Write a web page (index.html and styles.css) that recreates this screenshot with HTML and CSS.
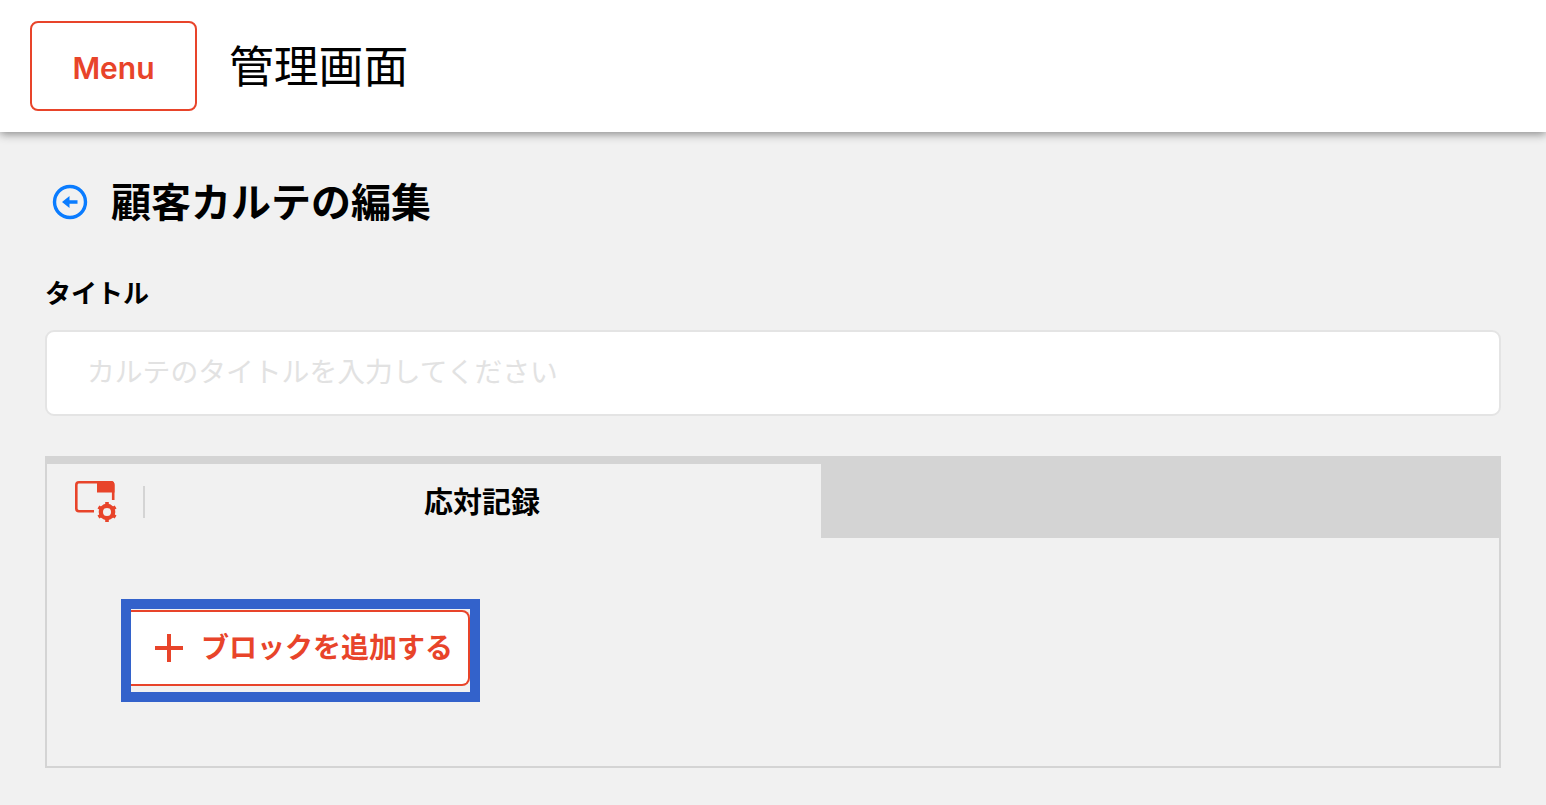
FILE: index.html
```html
<!DOCTYPE html>
<html lang="ja">
    <head>
        <meta charset="UTF-8">
        <title>管理画面</title>
        <link rel="stylesheet" href="styles.css">
    </head>

    <body>
        <header class="header">
            <button class="menu-button">Menu</button>
            <div class="header-title">管理画面</div>
        </header>

        <main class="content">
            <div class="page-heading">
                <svg class="back-icon" width="36" height="36" viewBox="0 0 36 36">
                    <circle cx="18" cy="18" r="15.5" fill="none" stroke="#0a7cff" stroke-width="3.4"/>
                    <path d="M10 18 L17.5 12 V16.3 H25.5 V19.7 H17.5 V24 Z" fill="#0a7cff"/>
                </svg>
                <h1 class="page-title">顧客カルテの編集</h1>
            </div>

            <label class="field-label">タイトル</label>
            <div class="title-input"><span class="placeholder">カルテのタイトルを入力してください</span></div>

            <section class="panel">
                <div class="tab-bar">
                    <div class="tab">
                        <svg class="tab-icon" width="43" height="42" viewBox="0 0 43 42">
                            <path d="M19 30.2 H4 Q1.3 30.2 1.3 27.5 V4 Q1.3 1.3 4 1.3 H36 Q38.2 1.3 38.2 4 V19" fill="none" stroke="#e8442a" stroke-width="2.6"/>
                            <path d="M22 0 H36 Q39.5 0 39.5 4 V11.5 H22 Z" fill="#e8442a"/>
                            <circle cx="32" cy="31" r="6.2" fill="none" stroke="#e8442a" stroke-width="4.2"/>
                            <path d="M32 21 V41 M23.4 26 L40.6 36 M23.4 36 L40.6 26" stroke="#e8442a" stroke-width="3.6"/>
                            <circle cx="32" cy="31" r="4" fill="#f1f1f1"/>
                        </svg>
                        <span class="tab-divider"></span>
                        <span class="tab-label">応対記録</span>
                    </div>
                </div>

                <div class="panel-body">
                    <div class="add-block-frame">
                        <button class="add-block">
                            <svg class="plus-icon" width="30" height="30" viewBox="0 0 30 30">
                                <path d="M1 15 H29 M15 1 V29" stroke="#e8442a" stroke-width="4"/>
                            </svg>
                            <span class="add-block-label">ブロックを追加する</span>
                        </button>
                    </div>
                </div>
            </section>
        </main>
    </body>
</html>
```

FILE: styles.css
```css
* {
    margin: 0;
    padding: 0;
    box-sizing: border-box;
}

html, body {
    height: 100%;
    overflow: hidden;
}

body {
    background: #f1f1f1;
    color: #000;
    font-family: "Noto Sans CJK JP", sans-serif;
}

.header {
    display: flex;
    align-items: center;
    gap: 33px;
    height: 132px;
    padding: 0 30px;
    background: #fff;
    box-shadow: 0 2px 9px rgba(0, 0, 0, 0.45);
}

.menu-button {
    width: 167px;
    height: 90px;
    margin-top: -1px;
    padding-top: 5px;
    background: #fff;
    border: 2px solid #e8442a;
    border-radius: 8px;
    color: #e8442a;
    font-family: Inter, "Liberation Sans", sans-serif;
    font-size: 30px;
    font-weight: 600;
}

.header-title {
    margin-left: -1px;
    font-size: 44.8px;
    line-height: 1;
    margin-top: -3px;
}

.content {
    padding: 0 45px;
}

.page-heading {
    display: flex;
    align-items: center;
    gap: 24px;
    height: 60px;
    margin-top: 40px;
    padding-left: 7px;
}

.page-title {
    margin-top: -4px;
    margin-left: -1px;
    font-size: 40px;
    font-weight: 700;
    line-height: 1;
}

.field-label {
    display: block;
    margin-top: 45px;
    font-size: 26px;
    font-weight: 700;
    line-height: 30px;
}

.title-input {
    display: flex;
    align-items: center;
    height: 86px;
    margin-top: 23px;
    padding-left: 40px;
    background: #fff;
    border: 2px solid #e4e4e4;
    border-radius: 9px;
    color: #e2e2e2;
    font-size: 27.8px;
}

.placeholder {
    margin-top: -6px;
}

.panel {
    height: 312px;
    margin-top: 40px;
    border: 2px solid #d4d4d4;
    border-top: 0;
}

.tab-bar {
    height: 82px;
    padding-top: 8px;
    background: #d4d4d4;
}

.tab {
    display: flex;
    align-items: center;
    width: 774px;
    height: 74px;
    padding-left: 28px;
    background: #f1f1f1;
}

.tab-icon {
    flex-shrink: 0;
    margin-top: 2px;
}

.tab-divider {
    width: 2px;
    height: 32px;
    margin-left: 25px;
    margin-top: 2px;
    background: #d4d4d4;
}

.tab-label {
    flex: 1;
    margin-top: -2px;
    padding-right: 2px;
    font-size: 29px;
    font-weight: 700;
    text-align: center;
}

.panel-body {
    padding: 61px 0 0 74px;
}

.add-block-frame {
    width: 359px;
    height: 103px;
    border: 10px solid #3362cb;
}

.add-block {
    display: flex;
    align-items: center;
    gap: 17px;
    width: 100%;
    height: 76px;
    margin-top: 1px;
    padding-left: 23px;
    background: #fff;
    border: 2px solid #e8442a;
    border-left: 0;
    border-radius: 0 8px 8px 0;
    color: #e8442a;
    font-family: "Noto Sans CJK JP", sans-serif;
    font-size: 28px;
    font-weight: 700;
}

.add-block-label {
    margin-top: -4px;
}
```
